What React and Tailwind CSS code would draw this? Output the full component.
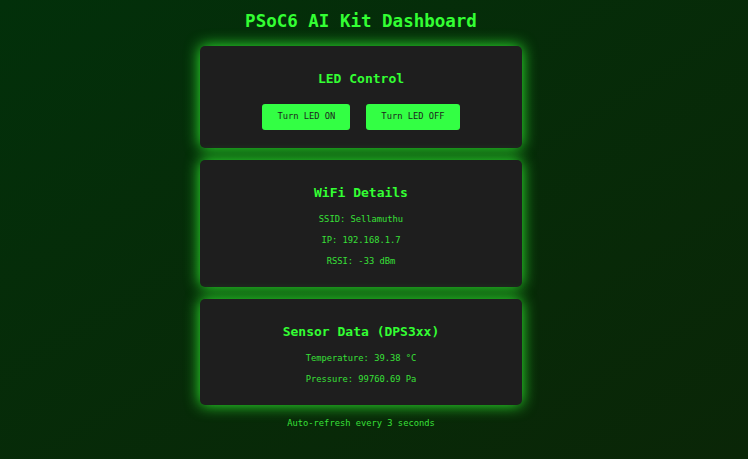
export default function App() {
  const font = { fontFamily: '"DejaVu Sans Mono", "Liberation Mono", monospace' };
  const card =
    "w-[322px] rounded-[5px] bg-[#1e1e1e] shadow-[0_0_15px_rgba(51,255,51,0.95)] flex flex-col items-center";

  return (
    <div
      className="min-h-screen w-full bg-linear-to-br from-[#02300a] to-[#0a2607]"
      style={font}
    >
      <div className="w-[722px] flex flex-col items-center pt-[11px]">
        <h1 className="text-[17.5px] leading-[21px] font-bold text-[#33ff33]">
          PSoC6 AI Kit Dashboard
        </h1>

        <div className={`${card} mt-[14px] pt-[25px] pb-[18px]`}>
          <h2 className="text-[13px] leading-[16px] font-bold text-[#33ff33]">LED Control</h2>
          <div className="mt-[17px] flex gap-4">
            <button className="h-[26px] px-[15px] rounded-[3px] bg-[#33ff44] text-[#1e1e1e] text-[8.75px]">
              Turn LED ON
            </button>
            <button className="h-[26px] px-[15px] rounded-[3px] bg-[#33ff44] text-[#1e1e1e] text-[8.75px]">
              Turn LED OFF
            </button>
          </div>
        </div>

        <div className={`${card} mt-3 pt-[25px] pb-[15.5px]`}>
          <h2 className="text-[13px] leading-[16px] font-bold text-[#33ff33]">WiFi Details</h2>
          <div className="mt-[7.5px] flex flex-col items-center text-[8.75px] leading-[21px] text-[#38e038]">
            <p>SSID: Sellamuthu</p>
            <p>IP: 192.168.1.7</p>
            <p>RSSI: -33 dBm</p>
          </div>
        </div>

        <div className={`${card} mt-3 pt-[25px] pb-[15.5px]`}>
          <h2 className="text-[13px] leading-[16px] font-bold text-[#33ff33]">Sensor Data (DPS3xx)</h2>
          <div className="mt-[7.5px] flex flex-col items-center text-[8.75px] leading-[21px] text-[#38e038]">
            <p>Temperature: 39.38 °C</p>
            <p>Pressure: 99760.69 Pa</p>
          </div>
        </div>

        <p className="mt-[8px] text-[8.75px] leading-[21px] text-[#38e038]">
          Auto-refresh every 3 seconds
        </p>
      </div>
    </div>
  );
}
